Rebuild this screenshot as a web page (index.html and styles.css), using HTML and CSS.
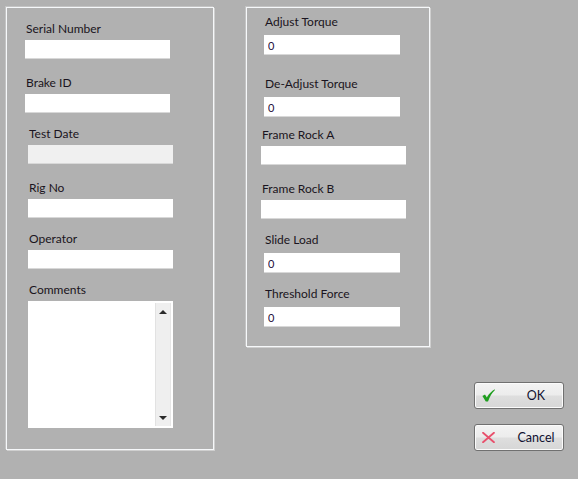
FILE: index.html
```html
<!DOCTYPE html>
<html>
<head>
<meta charset="utf-8">
<link rel="stylesheet" href="styles.css">
</head>
<body>
<div class="page">
  <div class="panel panel-left">
    <label class="lbl serial-l">Serial Number</label>
    <input class="inp serial-i" type="text" value="">
    <label class="lbl brake-l">Brake ID</label>
    <input class="inp brake-i" type="text" value="">
    <label class="lbl date-l">Test Date</label>
    <input class="inp date-i disabled" type="text" value="" disabled>
    <label class="lbl rig-l">Rig No</label>
    <input class="inp rig-i" type="text" value="">
    <label class="lbl op-l">Operator</label>
    <input class="inp op-i" type="text" value="">
    <label class="lbl com-l">Comments</label>
    <div class="textarea">
      <div class="ta-body"></div>
      <div class="scrollbar">
        <span class="arrow up"></span>
        <span class="arrow down"></span>
      </div>
    </div>
  </div>

  <div class="panel panel-right">
    <label class="lbl adj-l">Adjust Torque</label>
    <input class="inp adj-i" type="text" value="0">
    <label class="lbl dadj-l">De-Adjust Torque</label>
    <input class="inp dadj-i" type="text" value="0">
    <label class="lbl fra-l">Frame Rock A</label>
    <input class="inp fra-i" type="text" value="">
    <label class="lbl frb-l">Frame Rock B</label>
    <input class="inp frb-i" type="text" value="">
    <label class="lbl slide-l">Slide Load</label>
    <input class="inp slide-i" type="text" value="0">
    <label class="lbl thr-l">Threshold Force</label>
    <input class="inp thr-i" type="text" value="0">
  </div>

  <div class="buttons">
    <button class="btn">
      <svg class="icon" width="13" height="13" viewBox="0 0 13 13">
        <path d="M0.4 6.9 L3 5.6 L4.8 8.4 C7 4.9 9.6 2 12.8 0.3 L12.8 1.3 C10.2 3.6 7.8 7.4 6 12.6 L3.8 12.6 Z" fill="#1f9e1f"/>
      </svg>
      <span class="btn-text">OK</span>
    </button>
    <button class="btn">
      <svg class="icon" width="13" height="11" viewBox="0 0 13 11">
        <path d="M1 0.8 L12 10.2 M12 0.8 L1 10.2" stroke="#e8506c" stroke-width="1.8" stroke-linecap="round" fill="none"/>
      </svg>
      <span class="btn-text">Cancel</span>
    </button>
  </div>
</div>
</body>
</html>
```

FILE: styles.css
```css
* { box-sizing: border-box; }
html, body {
  margin: 0;
  padding: 0;
  width: 578px;
  height: 479px;
  background: #b1b1b1;
  overflow: hidden;
}
body {
  font-family: Lato, "Liberation Sans", sans-serif;
  color: #1a1420;
}
.page {
  display: flex;
  align-items: flex-start;
  padding: 7px 0 0 6px;
}
.panel {
  display: flex;
  flex-direction: column;
  align-items: flex-start;
  border: 1px solid #f6f8fa;
  box-shadow: 1px 1px 0 #cfcfcf, -1px -1px 0 #c4c4c4;
}
.panel-left { width: 208px; height: 443px; }
.panel-right { width: 184px; height: 340px; margin-left: 32px; }

.lbl {
  display: block;
  font-size: 12px;
  line-height: 15px;
  height: 15px;
  white-space: nowrap;
}
.inp {
  display: block;
  border: none;
  outline: none;
  background: #fff;
  width: 145px;
  height: 19px;
  padding: 0 0 0 4px;
  margin: 4px 0 0 0;
  font-family: Lato, "Liberation Sans", sans-serif;
  font-size: 11px;
  color: #24103a;
  box-shadow: inset 0 -1px 0 #d8d8d8;
}
.inp.disabled { background: #f0f0f0; }

/* left panel */
.serial-l { margin: 13px 0 0 19px; }
.serial-i { margin-left: 18px; }
.brake-l { margin: 16px 0 0 19px; }
.brake-i { margin-left: 18px; }
.date-l { margin: 13px 0 0 22px; }
.date-i { margin-left: 21px; }
.rig-l { margin: 16px 0 0 22px; }
.rig-i { margin-left: 21px; }
.op-l { margin: 13px 0 0 22px; }
.op-i { margin-left: 21px; }
.com-l { margin: 13px 0 0 22px; }

.textarea {
  display: flex;
  margin: 4px 0 0 21px;
  width: 145px;
  height: 127px;
  background: #fff;
  padding: 2px 2px 2px 0;
}
.ta-body { flex: 1; }
.scrollbar {
  width: 16px;
  background: #efefef;
  border-left: 1px solid #e2e2e2;
  border-right: 1px solid #e6e6e6;
  display: flex;
  flex-direction: column;
  justify-content: space-between;
  align-items: center;
  padding: 7px 0 6px 0;
}
.arrow {
  display: block;
  width: 0;
  height: 0;
  border-left: 4px solid transparent;
  border-right: 4px solid transparent;
}
.arrow.up { border-bottom: 4px solid #2a2a2a; }
.arrow.down { border-top: 4px solid #2a2a2a; }

/* right panel */
.adj-l { margin: 6px 0 0 18px; }
.adj-i { margin: 6px 0 0 17px; width: 136px; height: 20px; }
.dadj-l { margin: 21px 0 0 18px; }
.dadj-i { margin: 6px 0 0 17px; width: 136px; height: 20px; }
.fra-l { margin: 10px 0 0 15px; }
.fra-i { margin: 4px 0 0 14px; }
.frb-l { margin: 16px 0 0 15px; }
.frb-i { margin: 4px 0 0 14px; }
.slide-l { margin: 13px 0 0 18px; }
.slide-i { margin: 6px 0 0 17px; width: 136px; height: 20px; }
.thr-l { margin: 13px 0 0 18px; }
.thr-i { margin: 6px 0 0 17px; width: 136px; height: 20px; }

/* buttons */
.buttons {
  display: flex;
  flex-direction: column;
  gap: 15px;
  margin: 375px 0 0 44px;
}
.btn {
  display: flex;
  align-items: center;
  width: 90px;
  height: 27px;
  padding: 0 0 0 7px;
  border: 1px solid #707070;
  border-radius: 3px;
  background: linear-gradient(#f3f3f3 0%, #ececec 48%, #dedede 52%, #d6d6d6 100%);
  box-shadow: inset 0 0 0 1px #fbfbfb;
  font-family: Lato, "Liberation Sans", sans-serif;
  font-size: 12.5px;
  color: #101030;
  cursor: default;
}
.icon { display: block; flex: none; }
.btn-text {
  flex: 1;
  text-align: center;
  padding-left: 14px;
}
```
